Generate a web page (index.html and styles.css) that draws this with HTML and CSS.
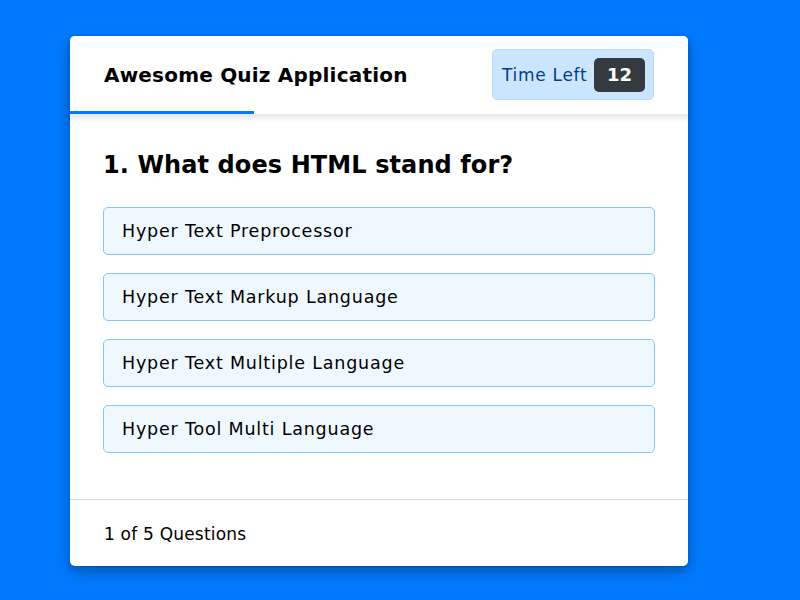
FILE: index.html
```html
<!DOCTYPE html>
<html lang="en">
<head>
<meta charset="utf-8">
<title>Awesome Quiz Application</title>
<link rel="stylesheet" href="styles.css">
</head>
<body>
  <div class="card">
    <header class="card-header">
      <div class="header-row">
        <div class="title">Awesome Quiz Application</div>
        <div class="timer">
          <span class="timer-label">Time Left</span>
          <span class="timer-sec">12</span>
        </div>
      </div>
      <div class="progress"></div>
    </header>
    <section class="card-body">
      <div class="question">1. What does HTML stand for?</div>
      <div class="options">
        <div class="option">Hyper Text Preprocessor</div>
        <div class="option">Hyper Text Markup Language</div>
        <div class="option">Hyper Text Multiple Language</div>
        <div class="option">Hyper Tool Multi Language</div>
      </div>
    </section>
    <footer class="card-footer">
      <span class="total">1 of 5 Questions</span>
    </footer>
  </div>
</body>
</html>
```
FILE: styles.css
```css
* { box-sizing: border-box; }
html, body { height: 100%; }
body {
  margin: 0;
  background: #007bff;
  font-family: "DejaVu Sans", "Open Sans", sans-serif;
  color: #000;
}
.card {
  width: 618px;
  margin: 36px 0 0 70px;
  background: #fff;
  border-radius: 5px;
  box-shadow: 0 4px 8px 0 rgba(0,0,0,0.2), 0 6px 20px 0 rgba(0,0,0,0.19);
}
.card-header {
  position: relative;
  z-index: 1;
  box-shadow: 0 3px 5px 1px rgba(0,0,0,0.1);
  border-radius: 5px 5px 0 0;
  background: #fff;
}
.header-row {
  height: 75px;
  padding: 2px 34px 0 34px;
  display: flex;
  align-items: center;
  justify-content: space-between;
}
.title {
  font-size: 20px;
  font-weight: 700;
  letter-spacing: 0.2px;
}
.timer {
  height: 51px;
  width: 162px;
  display: flex;
  align-items: center;
  justify-content: space-between;
  padding: 0 8px 0 9px;
  background: #cce5ff;
  border: 1px solid #b8daff;
  border-radius: 5px;
  color: #004085;
}
.timer-label {
  font-size: 17px;
  font-weight: 400;
  letter-spacing: 0.7px;
}
.timer-sec {
  width: 51px;
  height: 34px;
  display: flex;
  align-items: center;
  justify-content: center;
  background: #343a40;
  color: #fff;
  border-radius: 5px;
  font-size: 18px;
  font-weight: 700;
}
.progress {
  width: 184px;
  height: 3px;
  background: #007bff;
}
.card-body {
  padding: 36px 33px 46px;
}
.question {
  font-size: 24px;
  font-weight: 700;
  line-height: 30px;
  margin-bottom: 27px;
  letter-spacing: 0.1px;
}
.options {
  display: flex;
  flex-direction: column;
  gap: 18px;
}
.option {
  height: 48px;
  line-height: 45px;
  padding: 1px 18px 0;
  background: aliceblue;
  border: 1px solid #84c5fe;
  border-radius: 5px;
  font-size: 17.5px;
  letter-spacing: 0.8px;
}
.card-footer {
  height: 67px;
  border-top: 1px solid #dbdbdb;
  padding: 2px 34px 0;
  display: flex;
  align-items: center;
  font-size: 17px;
  letter-spacing: 0.2px;
}
```
